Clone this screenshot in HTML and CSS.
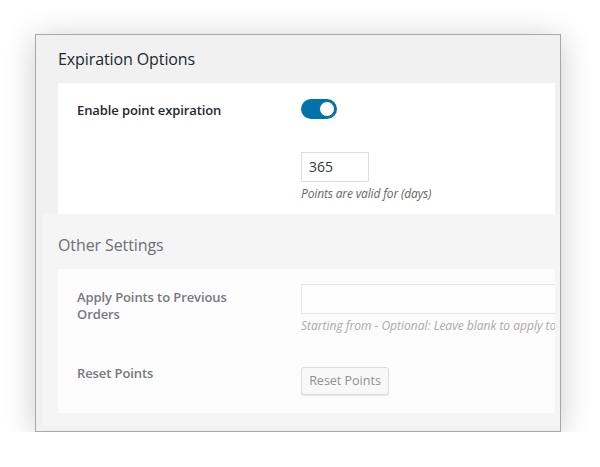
FILE: index.html
```html
<!DOCTYPE html>
<html>
<head>
<meta charset="utf-8">
<link rel="stylesheet" href="styles.css">
</head>
<body>
<div class="frame">
  <div class="top">
    <h2 class="title">Expiration Options</h2>
    <div class="card card-1">
      <div class="row row-toggle">
        <div class="label">Enable point expiration</div>
        <div class="field">
          <span class="toggle"><span class="knob"></span></span>
        </div>
      </div>
      <div class="row row-days">
        <div class="label"></div>
        <div class="field">
          <div class="input input-small">365</div>
          <p class="desc">Points are valid for (days)</p>
        </div>
      </div>
    </div>
  </div>
  <div class="faded">
    <h2 class="title title-faded">Other Settings</h2>
    <div class="card card-2">
      <div class="row row-apply">
        <div class="label label-faded label-apply">Apply Points to Previous Orders</div>
        <div class="field field-clip">
          <div class="input input-wide"></div>
          <p class="desc desc-faded">Starting from - Optional: Leave blank to apply to all orders</p>
        </div>
      </div>
      <div class="row row-reset">
        <div class="label label-faded label-reset">Reset Points</div>
        <div class="field">
          <span class="button">Reset Points</span>
        </div>
      </div>
    </div>
  </div>
</div>
</body>
</html>
```

FILE: styles.css
```css
html, body {
  margin: 0;
  padding: 0;
  background: #ffffff;
}

body {
  font-family: "Open Sans", "Noto Sans", sans-serif;
  color: #23282d;
  padding: 34px 0 0 35px;
}

.frame {
  width: 524px;
  height: 396px;
  border: 1px solid #a8a8a8;
  background: #f1f1f1;
  box-shadow: 0 4px 30px rgba(0, 0, 0, 0.2);
  overflow: hidden;
  display: flex;
  flex-direction: column;
}

.top {
  padding: 0 5px 0 22px;
}

.title {
  margin: 0;
  height: 48px;
  line-height: 48px;
  font-size: 16px;
  font-weight: 400;
  color: #23282d;
  letter-spacing: -0.1px;
}

.card {
  background: #ffffff;
  padding-left: 19px;
  overflow: hidden;
}

.card-1 {
  height: 131px;
  box-sizing: border-box;
  padding-top: 16px;
}

.row {
  display: grid;
  grid-template-columns: 224px 1fr;
}

.label {
  font-size: 13px;
  font-weight: 600;
  line-height: 17px;
  color: #23282d;
  letter-spacing: -0.1px;
}

.row-toggle .label {
  padding-top: 3px;
}

.row-toggle {
  height: 20px;
}

.toggle {
  display: block;
  position: relative;
  width: 36px;
  height: 20px;
  border-radius: 10px;
  background: #0073aa;
}

.knob {
  position: absolute;
  top: 2px;
  right: 2px;
  width: 14px;
  height: 14px;
  border-radius: 50%;
  background: #ffffff;
  border: 1px solid #0b6a9c;
}

.row-days {
  padding-top: 33px;
}

.input {
  box-sizing: border-box;
  height: 30px;
  border: 1px solid #dddddd;
  background: #ffffff;
  font-size: 14px;
  line-height: 28px;
  padding: 0 7px;
  color: #32373c;
}

.input-small {
  width: 68px;
}

.desc {
  margin: 3px 0 0;
  font-size: 12px;
  font-style: italic;
  color: #666666;
  line-height: 17px;
  white-space: nowrap;
  letter-spacing: -0.15px;
}

.field-clip {
  overflow: hidden;
}

.faded {
  margin-left: 6px;
  padding: 0 5px 0 16px;
  background: #f5f5f5;
  height: 212px;
  box-sizing: border-box;
}

.title-faded {
  height: 55px;
  line-height: 62px;
  color: #6d7074;
}

.card-2 {
  background: #fcfcfc;
  height: 144px;
  box-sizing: border-box;
  padding-top: 15px;
}

.label-faded {
  color: #77797d;
}

.label-apply {
  padding-top: 5px;
  width: 170px;
}

.input-wide {
  width: 400px;
  background: #fefefe;
  border-color: #e6e6e6;
}

.desc-faded {
  color: #aaaaaa;
  letter-spacing: 0;
}

.row-reset {
  padding-top: 33px;
}

.label-reset {
  margin-top: -2px;
}

.button {
  display: inline-block;
  box-sizing: border-box;
  height: 28px;
  width: 88px;
  border: 1px solid #dcdcdc;
  border-radius: 3px;
  background: #f8f8f8;
  box-shadow: 0 1px 0 #e6e6e6;
  font-size: 12.5px;
  line-height: 26px;
  text-align: center;
  color: #8f9195;
}
```
